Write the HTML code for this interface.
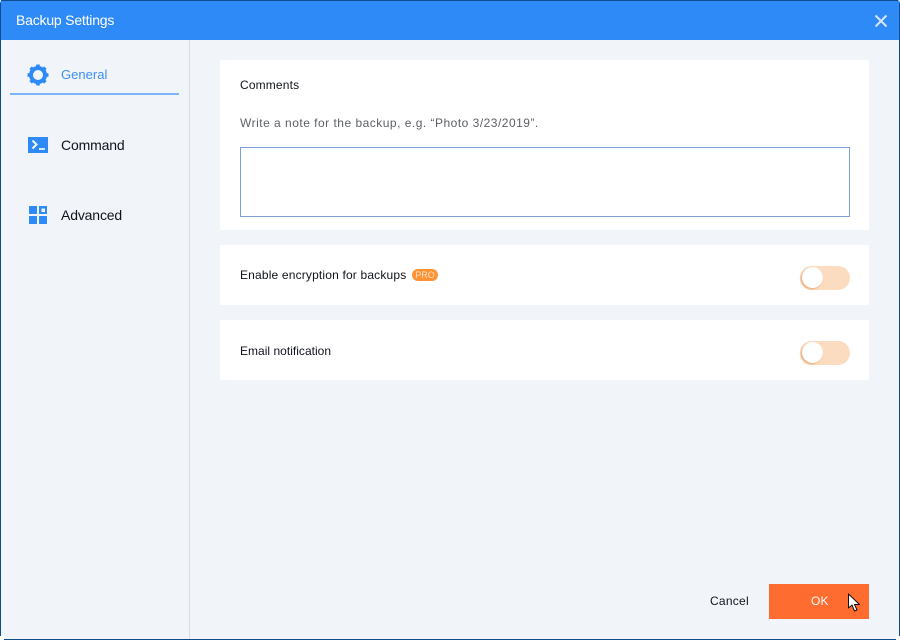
<!DOCTYPE html>
<html><head><meta charset="utf-8"><style>
html,body{margin:0;padding:0;background:#fff}
body{width:900px;height:640px;position:relative;overflow:hidden;font-family:"Liberation Sans",sans-serif}
div,span,svg{position:absolute}
.t{white-space:nowrap;font-size:13px;line-height:16px;color:#10131c}
.card{background:#fff;left:220px;width:649px}
.tg{left:800px;width:50px;height:24px;border-radius:12px;background:#fcdcc0}
.kn{left:802px;width:21px;height:21px;border-radius:50%;background:#fff;box-shadow:-1px 1px 2px #e8a36f}
</style></head><body>
<div style="left:0;top:0;width:900px;height:640px;background:#f1f5fa"></div>
<div style="left:0;top:0;width:900px;height:40px;background:#2e8af6;border-radius:3px 3px 0 0"></div>
<div style="left:1px;top:0;width:897px;height:1px;background:#0f4c8f"></div>
<div style="left:0;top:3px;width:1px;height:633px;background:#0f4c8f"></div>
<div style="left:899px;top:3px;width:1px;height:633px;background:#0f4c8f"></div>
<div style="left:4px;top:639px;width:892px;height:1px;background:#0f4c8f"></div>
<div style="left:0;top:636px;width:4px;height:4px;background:#fff"></div>
<div style="left:896px;top:636px;width:4px;height:4px;background:#fff"></div>
<div style="left:189px;top:40px;width:1px;height:599px;background:#d8dde3"></div>

<span class="t" style="left:16px;top:12px;color:#fff;font-size:14px;letter-spacing:-.2px">Backup Settings</span>
<svg style="left:874px;top:14px" width="14" height="14" viewBox="0 0 14 14"><path d="M1.5 1.5L12.5 12.5M12.5 1.5L1.5 12.5" stroke="#d3e6fd" stroke-width="2" fill="none"/></svg>

<svg style="left:27px;top:64px" width="22" height="22" viewBox="0 0 22 22"><circle cx="11" cy="11" r="7" fill="none" stroke="#2e8af6" stroke-width="4"/><path d="M11 .5V21.5M.5 11H21.5M3.6 3.6L18.4 18.4M18.4 3.6L3.6 18.4" stroke="#2e8af6" stroke-width="3.6" fill="none"/><circle cx="11" cy="11" r="5" fill="#f1f5fa"/></svg>
<span class="t" style="left:61px;top:67px;color:#3b8ef5;font-size:13px;letter-spacing:.02px">General</span>
<div style="left:10px;top:93px;width:169px;height:2px;background:#7db5f8"></div>

<svg style="left:28px;top:137px" width="20" height="16" viewBox="0 0 20 16"><rect width="20" height="16" fill="#2e8af6"/><path d="M4.5 3.5L8.5 7.5L4.5 11.5" stroke="#f2f8ff" stroke-width="2" fill="none"/><path d="M11 12H17" stroke="#fff" stroke-width="1.6"/></svg>
<span class="t" style="left:61px;top:137px;font-size:14px;letter-spacing:-.15px">Command</span>

<svg style="left:29px;top:206px" width="18" height="18" viewBox="0 0 18 18"><rect width="8" height="8" rx=".5" fill="#2e8af6"/><rect x="10" width="8" height="8" fill="#2e8af6"/><rect x="12.5" y="2.5" width="3.5" height="3.5" fill="#f1f5fa"/><rect y="10" width="8" height="8" rx=".5" fill="#2e8af6"/><rect x="10" y="10" width="8" height="8" rx=".5" fill="#2e8af6"/></svg>
<span class="t" style="left:61px;top:207px;font-size:14px;letter-spacing:-.15px">Advanced</span>

<div class="card" style="top:60px;height:170px"></div>
<span class="t" style="left:240px;top:77px;font-size:12px;letter-spacing:.15px">Comments</span>
<span class="t" style="left:240px;top:115px;font-size:12px;color:#5c5f66;letter-spacing:.49px">Write a note for the backup, e.g. “Photo 3/23/2019”.</span>
<div style="left:240px;top:147px;width:608px;height:68px;border:1px solid #7f9fd0;background:#fff"></div>

<div class="card" style="top:245px;height:60px"></div>
<span class="t" style="left:240px;top:267px;font-size:12px;letter-spacing:.17px">Enable encryption for backups</span>
<div style="left:412px;top:269px;width:26px;height:12px;border-radius:6px;background:#ff9233"></div>
<span style="left:412px;top:269px;width:26px;text-align:center;font-size:9px;line-height:12px;color:#ffe3c8;letter-spacing:0">PRO</span>
<div class="tg" style="top:266px"></div><div class="kn" style="top:267px"></div>

<div class="card" style="top:320px;height:60px"></div>
<span class="t" style="left:240px;top:343px;font-size:12px;letter-spacing:.02px">Email notification</span>
<div class="tg" style="top:341px"></div><div class="kn" style="top:342px"></div>

<span class="t" style="left:710px;top:593px;font-size:12px;letter-spacing:.25px">Cancel</span>
<div style="left:769px;top:584px;width:100px;height:35px;background:#ff6c2f"></div>
<span class="t" style="left:811px;top:593px;font-size:12px;color:#fff;letter-spacing:.2px">OK</span>
<svg style="left:847px;top:593px" width="14" height="20" viewBox="0 0 14 20"><path d="M1.5 1V15L5 12L7.5 18L10 17L7.5 11.5H12.5Z" fill="#fff" stroke="#111" stroke-width="1" stroke-linejoin="round"/></svg>
</body></html>
